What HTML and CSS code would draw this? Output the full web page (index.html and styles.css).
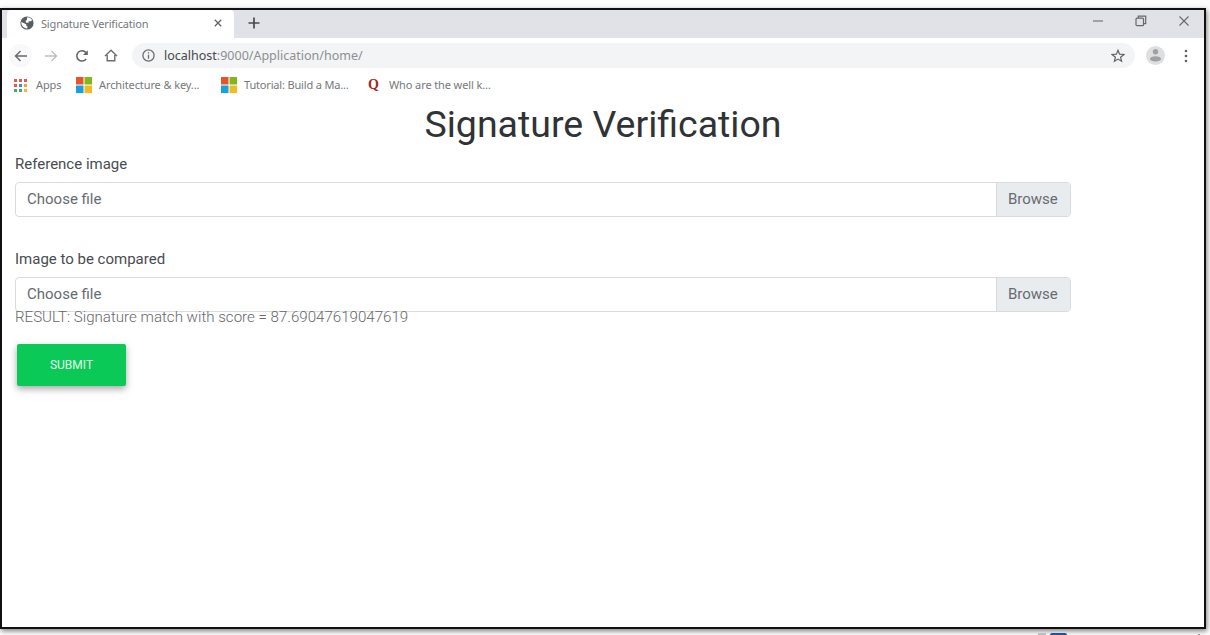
FILE: index.html
```
<!DOCTYPE html>
<html lang="en">
<head>
<meta charset="utf-8">
<title>Signature Verification</title>
<link rel="stylesheet" href="styles.css">
</head>
<body>
<div class="window">
  <header class="tabstrip">
    <div class="tab">
      <svg class="globe" width="14" height="14" viewBox="0 0 14 14"><circle cx="7" cy="7" r="6.6" fill="#5a5d61"/><path d="M7.2 1.3 C9.5 1.3 11.3 2.5 12.2 4.2 L10.7 5.3 8.8 5.3 8.5 6.7 6.4 6.7 5.4 5.1 6.8 4.1Z M1.3 6.1 L4.7 7.5 6.4 8.4 6.2 9.8 7.6 10.4 7.1 12.5 C3.4 12.3 1.1 9.6 1.3 6.1Z" fill="#fff"/></svg>
      <span class="tab-title">Signature Verification</span>
      <svg class="tab-close" width="8" height="8" viewBox="0 0 8 8"><path d="M.8.8 7.2 7.2M7.2.8.8 7.2" stroke="#5f6266" stroke-width="1.3"/></svg>
    </div>
    <svg class="new-tab" width="12" height="12" viewBox="0 0 12 12"><path d="M6 .5V11.500M.5 6H11.500" stroke="#46494d" stroke-width="1.7"/></svg>
    <div class="controls">
      <svg width="10" height="12" viewBox="0 0 10 12"><path d="M0 6H10" stroke="#777" stroke-width="1.2"/></svg>
      <svg width="12" height="12" viewBox="0 0 12 12" fill="none" stroke="#66686b" stroke-width="1.2"><rect x="1" y="3.200" width="7.500" height="7.500" rx="1"/><path d="M3.300 3V1.200H10.700V8.700H8.700"/></svg>
      <svg width="10" height="12" viewBox="0 0 10 12"><path d="M.5 1.500 9.500 10.500M9.500 1.500.5 10.500" stroke="#66686b" stroke-width="1.1"/></svg>
    </div>
  </header>
  <nav class="toolbar">
    <span class="back"><svg width="14" height="12" viewBox="0 0 14 12"><path d="M13 6H1.500M6.500 1 1.500 6 6.500 11" fill="none" stroke="#66696d" stroke-width="1.4"/></svg></span>
    <svg class="forward" width="13" height="12" viewBox="0 0 13 12"><path d="M0 6H11.500M6.500 1 11.500 6 6.500 11" fill="none" stroke="#bcbec0" stroke-width="1.4"/></svg>
    <svg class="reload" width="14" height="14" viewBox="0 0 14 14"><path d="M11.200 10A5.200 5.200 0 1 1 10.900 3.400" fill="none" stroke="#5f6368" stroke-width="1.5"/><path d="M12.800 1.200V6H8Z" fill="#5f6368"/></svg>
    <svg class="home" width="14" height="13" viewBox="0 0 14 13"><path d="M1 7 7 1.300 13 7M3.200 6V11.800H10.800V6" fill="none" stroke="#6b6e72" stroke-width="1.4"/></svg>
    <div class="omnibox">
      <svg width="13" height="13" viewBox="0 0 13 13"><circle cx="6.500" cy="6.500" r="5.600" fill="none" stroke="#6b6e72" stroke-width="1.3"/><path d="M6.500 5.700V9.700M6.500 3.300V4.600" stroke="#6b6e72" stroke-width="1.3"/></svg>
      <span class="url"><b>localhost</b>:9000/Application/home/</span>
      <svg class="star" width="14" height="14" viewBox="0 0 14 14"><path d="M7 1.300 8.600 5.200 12.900 5.500 9.600 8.200 10.600 12.300 7 10.100 3.400 12.300 4.400 8.200 1.100 5.500 5.400 5.200Z" fill="none" stroke="#5f6368" stroke-width="1.2"/></svg>
    </div>
    <svg class="avatar" width="19" height="19" viewBox="0 0 19 19"><circle cx="9.500" cy="9.500" r="9.500" fill="#dedfe0"/><circle cx="9.500" cy="5.800" r="2.700" fill="#a0a1a3"/><ellipse cx="9.500" cy="12.900" rx="5.500" ry="2.600" fill="#a0a1a3"/></svg>
    <svg class="menu" width="4" height="14" viewBox="0 0 4 14" fill="#5f6368"><circle cx="2" cy="2" r="1.300"/><circle cx="2" cy="7" r="1.300"/><circle cx="2" cy="12" r="1.300"/></svg>
  </nav>
  <nav class="bookmarks">
    <svg class="apps" width="13" height="13" viewBox="0 0 13 13"><path d="M0 0h3v3H0zM5 0h3v3H5zM10 0h3v3h-3zM0 5h3v3H0z" fill="#e05a4e"/><path d="M5 5h3v3H5z" fill="#4285e8"/><path d="M10 5h3v3h-3z" fill="#e8a33b"/><path d="M0 10h3v3H0zM5 10h3v3H5z" fill="#46a869"/><path d="M10 10h3v3h-3z" fill="#edb548"/></svg>
    <span class="bm bm-apps">Apps</span>
    <svg class="ms" width="16" height="16" viewBox="0 0 16 16"><path d="M0 0h7.500v7.500H0z" fill="#e8542a"/><path d="M8.500 0H16v7.500H8.500z" fill="#80b81c"/><path d="M0 8.500h7.500V16H0z" fill="#18a0df"/><path d="M8.500 8.500H16V16H8.500z" fill="#f4bb20"/></svg>
    <span class="bm bm-arch">Architecture &amp; key...</span>
    <svg class="ms" width="16" height="16" viewBox="0 0 16 16"><path d="M0 0h7.500v7.500H0z" fill="#e8542a"/><path d="M8.500 0H16v7.500H8.500z" fill="#80b81c"/><path d="M0 8.500h7.500V16H0z" fill="#18a0df"/><path d="M8.500 8.500H16V16H8.500z" fill="#f4bb20"/></svg>
    <span class="bm bm-tut">Tutorial: Build a Ma...</span>
    <span class="quora">Q</span>
    <span class="bm bm-who">Who are the well k...</span>
  </nav>
  <main class="page">
    <h1>Signature Verification</h1>
    <form class="form">
      <p class="label label-ref">Reference image</p>
      <div class="file"><span class="choose">Choose file</span><span class="browse">Browse</span></div>
      <p class="label label-cmp">Image to be compared</p>
      <div class="file"><span class="choose">Choose file</span><span class="browse">Browse</span></div>
      <p class="result">RESULT: Signature match with score = 87.69047619047619</p>
      <button class="submit" type="button">SUBMIT</button>
    </form>
  </main>
</div>
<footer class="below"><i class="chip-grey"></i><i class="chip-blue"></i><i class="speck"></i></footer>
</body>
</html>
```
FILE: styles.css
```
* { box-sizing: border-box; }
body {
  margin: 0;
  height: 635px;
  overflow: hidden;
  padding-top: 8px;
  background: #fdfdfd;
  font-family: Roboto, sans-serif;
}
svg { display: block; flex: none; }
p, h1 { margin: 0; }
.window {
  width: 1206px;
  height: 621px;
  border: 2px solid #111;
  background: #fff;
  box-shadow: 1px 2px 5px rgba(0, 0, 0, .5);
}

/* Browser chrome */
.tabstrip {
  display: flex;
  align-items: center;
  height: 28px;
  padding-left: 5px;
  background: #e1e2e7;
}
.tab {
  display: flex;
  align-items: center;
  width: 227px;
  height: 28px;
  padding-left: 13px;
  padding-bottom: 2px;
  border-radius: 4px 4px 0 0;
  background: #fff;
}
.tab-title {
  width: 173px;
  margin-left: 7px;
  color: #75787c;
  font: 11px "Noto Sans", sans-serif;
  letter-spacing: -.17px;
  white-space: nowrap;
}
.new-tab { margin: 0 0 2px 14px; }
.controls {
  display: flex;
  align-items: center;
  gap: 32px;
  margin: 0 15px 6px auto;
}
.toolbar {
  display: flex;
  align-items: center;
  height: 35px;
}
.back {
  display: grid;
  place-items: center;
  width: 23px;
  height: 23px;
  margin-left: 7px;
  border-radius: 50%;
  background: #f8f8f8;
}
.forward { margin-left: 13px; }
.reload { margin-left: 17px; }
.home { margin-left: 15px; }
.omnibox {
  display: flex;
  align-items: center;
  width: 1003px;
  height: 25px;
  margin-left: 14px;
  padding: 0 10px;
  border-radius: 13px;
  background: #f3f4f5;
}
.url {
  margin-left: 9px;
  color: #8c8f93;
  font: 12.5px "Noto Sans", sans-serif;
}
.url b { color: #45484b; font-weight: 400; }
.star { margin-left: auto; }
.avatar { margin-left: 11px; }
.menu { margin-left: 19px; }
.bookmarks {
  display: flex;
  align-items: center;
  height: 24px;
  padding-left: 12px;
}
.bm {
  padding-bottom: 2px;
  color: #75787c;
  font: 11px "Noto Sans", sans-serif;
  letter-spacing: -.11px;
  white-space: nowrap;
}
.bm-apps { width: 40px; margin-left: 9px; }
.bm-arch { width: 122px; margin-left: 7px; }
.bm-tut { width: 124px; margin-left: 7px; letter-spacing: -.17px; }
.quora {
  width: 14px;
  color: #a52a20;
  font: bold 14px/16px "Liberation Serif", serif;
}
.bm-who { margin-left: 7px; }

/* Page */
h1 {
  height: 52px;
  color: #303336;
  font-size: 37.5px;
  font-weight: 400;
  line-height: 54px;
  text-align: center;
}
.form { padding-left: 13px; }
.label {
  color: #494c4f;
  font-size: 15px;
  line-height: 20px;
}
.label-ref { padding-top: 5px; }
.label-cmp { padding-top: 32px; }
.file {
  display: flex;
  width: 1056px;
  height: 35px;
  margin-top: 8px;
  border: 1px solid #d8dbdf;
  border-radius: 4px;
  overflow: hidden;
  color: #666b71;
  font-size: 15px;
  line-height: 33px;
}
.choose { flex: 1; padding-left: 11px; }
.browse {
  width: 74px;
  padding-left: 11px;
  border-left: 1px solid #d8dbdf;
  background: #e9ecef;
}
.result {
  height: 32px;
  color: #66686b;
  font-size: 15.1px;
  font-weight: 300;
  line-height: 11px;
}
.submit {
  display: block;
  width: 109px;
  height: 42px;
  margin-left: 2px;
  padding: 0;
  border: 0;
  border-radius: 2px;
  background: #0bc957;
  box-shadow: 0 3px 7px rgba(0, 0, 0, .35);
  color: #e2fbea;
  font: 12px Roboto, sans-serif;
}
.below {
  display: flex;
  align-items: flex-end;
  height: 6px;
  padding-left: 1038px;
}
.chip-grey { width: 8px; height: 2px; background: #bcc0c6; }
.chip-blue { width: 17px; height: 2px; border-radius: 3px 3px 0 0; margin-left: 4px; background: #235391; }
.speck { width: 2px; height: 1px; margin-left: 131px; background: #999; }
```
